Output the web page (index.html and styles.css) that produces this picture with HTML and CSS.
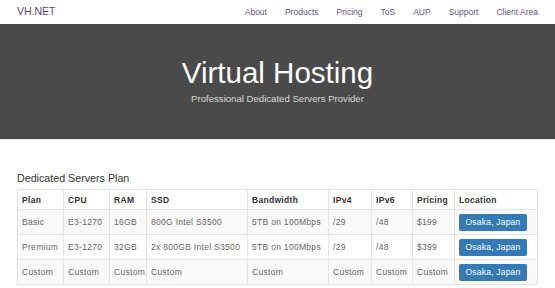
FILE: index.html
```html
<!DOCTYPE html>
<html lang="en">
<head>
    <meta charset="UTF-8">
    <meta name="viewport" content="width=device-width, initial-scale=1.0">
    <title>VH.NET - Virtual Hosting</title>
    <link rel="stylesheet" href="styles.css">
</head>
<body>
    <nav class="navbar">
        <div class="brand"><a href="#">VH.NET</a></div>
        <ul class="nav-links">
            <li><a href="#">About</a></li>
            <li><a href="#">Products</a></li>
            <li><a href="#">Pricing</a></li>
            <li><a href="#">ToS</a></li>
            <li><a href="#">AUP</a></li>
            <li><a href="#">Support</a></li>
            <li><a href="#">Client Area</a></li>
        </ul>
    </nav>

    <header class="jumbotron">
        <h1>Virtual Hosting</h1>
        <p>Professional Dedicated Servers Provider</p>
    </header>

    <section class="plans">
        <h2>Dedicated Servers Plan</h2>
        <table class="plan-table">
            <colgroup>
                <col class="c-plan"><col class="c-cpu"><col class="c-ram"><col class="c-ssd">
                <col class="c-bw"><col class="c-ip4"><col class="c-ip6"><col class="c-price"><col class="c-loc">
            </colgroup>
            <thead>
                <tr>
                    <th>Plan</th><th>CPU</th><th>RAM</th><th>SSD</th><th>Bandwidth</th>
                    <th>IPv4</th><th>IPv6</th><th>Pricing</th><th>Location</th>
                </tr>
            </thead>
            <tbody>
                <tr>
                    <td>Basic</td><td>E3-1270</td><td>16GB</td><td>800G Intel S3500</td><td>5TB on 100Mbps</td>
                    <td>/29</td><td>/48</td><td>$199</td><td><a class="btn" href="#">Osaka, Japan</a></td>
                </tr>
                <tr>
                    <td>Premium</td><td>E3-1270</td><td>32GB</td><td>2x 800GB Intel S3500</td><td>5TB on 100Mbps</td>
                    <td>/29</td><td>/48</td><td>$399</td><td><a class="btn" href="#">Osaka, Japan</a></td>
                </tr>
                <tr>
                    <td>Custom</td><td>Custom</td><td>Custom</td><td>Custom</td><td>Custom</td>
                    <td>Custom</td><td>Custom</td><td>Custom</td><td><a class="btn" href="#">Osaka, Japan</a></td>
                </tr>
            </tbody>
        </table>
    </section>
</body>
</html>
```

FILE: styles.css
```css
* {
    box-sizing: border-box;
}
body {
    margin: 0;
    font-family: "Liberation Sans", Arial, sans-serif;
    color: #333;
    background: #fff;
}
a {
    text-decoration: none;
}
.navbar {
    height: 24px;
    padding: 0 17px 2px 17px;
    display: flex;
    align-items: center;
    background: #fff;
}
.brand {
    flex: none;
    font-size: 10.5px;
    line-height: 12px;
}
.brand a {
    color: #54497c;
}
.nav-links {
    list-style: none;
    margin: 0 0 0 auto;
    padding: 0;
    display: flex;
    gap: 18px;
    line-height: 12px;
}
.nav-links a {
    font-size: 8.5px;
    color: #5f5589;
}
.jumbotron {
    height: 116px;
    background: #4a4a4a;
    color: #fff;
    text-align: center;
    border-bottom: 1px solid #e2e2e2;
    display: flex;
    flex-direction: column;
    align-items: center;
    padding-top: 32px;
}
.jumbotron h1 {
    margin: 0;
    font-size: 29.5px;
    font-weight: normal;
    line-height: 34px;
}
.jumbotron p {
    margin: 3px 0 0 0;
    font-size: 9.6px;
    color: #d8d8d8;
}
.plans {
    padding: 32px 17px 0 17px;
}
.plans h2 {
    margin: 0 0 4px 0;
    font-size: 10.7px;
    font-weight: normal;
    line-height: 13px;
}
.plan-table {
    width: 520px;
    table-layout: fixed;
    border-collapse: collapse;
    font-size: 8.5px;
    letter-spacing: 0.3px;
}
.c-plan { width: 46px; }
.c-cpu { width: 46px; }
.c-ram { width: 37px; }
.c-ssd { width: 101px; }
.c-bw { width: 81px; }
.c-ip4 { width: 43px; }
.c-ip6 { width: 41px; }
.c-price { width: 42px; }
.c-loc { width: 83px; }
.plan-table th,
.plan-table td {
    border: 1px solid #e3e3e3;
    text-align: left;
    white-space: nowrap;
    overflow: hidden;
    padding: 0 4px;
}
.plan-table th {
    height: 20px;
    font-weight: bold;
    color: #333;
}
.plan-table td {
    height: 25px;
    color: #666;
}
.plan-table tbody tr:nth-child(odd) {
    background: #f9f9f9;
}
.btn {
    display: block;
    width: 68px;
    height: 17px;
    line-height: 17px;
    text-align: center;
    background: #337ab7;
    color: #fff;
    border-radius: 2px;
    font-size: 8.5px;
    letter-spacing: 0.2px;
}
```
